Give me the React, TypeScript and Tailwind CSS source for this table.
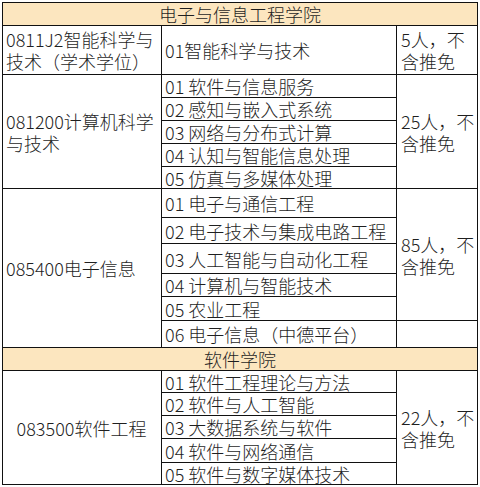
const font = {
  fontFamily: '"Noto Sans CJK SC", "Noto Sans", sans-serif',
};

type Section = {
  code: string;
  center?: boolean;
  dirs: { t: string; h: string }[];
  quota: string;
  quotaSpan?: number;
};

const cell = "border border-[#111] align-middle py-0";

function SectionRows({ s }: { s: Section }) {
  const span = s.quotaSpan ?? s.dirs.length;
  return (
    <>
      {s.dirs.map((d, i) => (
        <tr key={i} className={d.h}>
          {i === 0 && (
            <td
              rowSpan={s.dirs.length}
              className={`${cell} pl-[3px] pr-1 leading-[22px] ${s.center ? "text-center" : "text-left"}`}
            >
              {s.code}
            </td>
          )}
          <td className={`${cell} pl-[3px] pr-0 leading-[20px] whitespace-nowrap`}>{d.t}</td>
          {i === 0 && (
            <td rowSpan={span} className={`${cell} pl-[4px] pr-0 leading-[22px]`}>
              {s.quota}
            </td>
          )}
          {i === span && <td className={cell}></td>}
        </tr>
      ))}
    </>
  );
}

export default function App() {
  const sections: Section[] = [
    {
      code: "0811J2智能科学与技术（学术学位）",
      dirs: [{ t: "01智能科学与技术", h: "h-[49px]" }],
      quota: "5人，不含推免",
    },
    {
      code: "081200计算机科学与技术",
      dirs: [
        { t: "01 软件与信息服务", h: "h-[23px]" },
        { t: "02 感知与嵌入式系统", h: "h-[23px]" },
        { t: "03 网络与分布式计算", h: "h-[23px]" },
        { t: "04 认知与智能信息处理", h: "h-[23px]" },
        { t: "05 仿真与多媒体处理", h: "h-[22px]" },
      ],
      quota: "25人，不含推免",
    },
    {
      code: "085400电子信息",
      dirs: [
        { t: "01 电子与通信工程", h: "h-[29px]" },
        { t: "02 电子技术与集成电路工程", h: "h-[26px]" },
        { t: "03 人工智能与自动化工程", h: "h-[30px]" },
        { t: "04 计算机与智能技术", h: "h-[23px]" },
        { t: "05 农业工程", h: "h-[24px]" },
        { t: "06 电子信息（中德平台）", h: "h-[27px]" },
      ],
      quota: "85人，不含推免",
      quotaSpan: 5,
    },
  ];

  const soft: Section = {
    code: "083500软件工程",
    center: true,
    dirs: [
      { t: "01 软件工程理论与方法", h: "h-[22px]" },
      { t: "02 软件与人工智能", h: "h-[23px]" },
      { t: "03 大数据系统与软件", h: "h-[23px]" },
      { t: "04 软件与网络通信", h: "h-[24px]" },
      { t: "05 软件与数字媒体技术", h: "h-[22px]" },
    ],
    quota: "22人，不含推免",
  };

  return (
    <div className="w-[480px] h-[487px] bg-white pt-[2px] pl-[2px]" style={font}>
      <table className="border-collapse table-fixed w-[475px] text-[18px] font-light text-[#1f1f1f]">
        <colgroup>
          <col className="w-[159px]" />
          <col className="w-[235px]" />
          <col className="w-[81px]" />
        </colgroup>
        <tbody>
          <tr className="h-[23px]">
            <td colSpan={3} className={`${cell} bg-[#fce6bf] text-center leading-[20px] px-0`}>
              电子与信息工程学院
            </td>
          </tr>
          {sections.map((s, i) => (
            <SectionRows key={i} s={s} />
          ))}
          <tr className="h-[23px]">
            <td colSpan={3} className={`${cell} bg-[#fce6bf] text-center leading-[20px] px-0`}>
              软件学院
            </td>
          </tr>
          <SectionRows s={soft} />
        </tbody>
      </table>
    </div>
  );
}
